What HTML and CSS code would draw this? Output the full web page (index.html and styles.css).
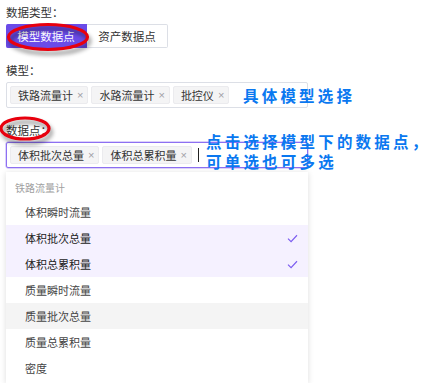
FILE: index.html
```html
<!DOCTYPE html>
<html lang="zh-CN">

<head>
    <meta charset="UTF-8">
    <title>数据点选择</title>
    <link rel="stylesheet" href="styles.css">
</head>

<body>
    <div class="page">
        <div class="label first">数据类型：</div>
        <div class="radio-group">
            <span class="radio-btn active">模型数据点</span>
            <span class="radio-btn">资产数据点</span>
        </div>

        <div class="label">模型：</div>
        <div class="select">
            <span class="tag">铁路流量计<i class="close">×</i></span>
            <span class="tag">水路流量计<i class="close">×</i></span>
            <span class="tag">批控仪<i class="close">×</i></span>
        </div>

        <div class="label">数据点：</div>
        <div class="select focus">
            <span class="tag">体积批次总量<i class="close">×</i></span>
            <span class="tag">体积总累积量<i class="close">×</i></span>
            <span class="cursor"></span>
        </div>

        <div class="dropdown">
            <div class="group-title">铁路流量计</div>
            <div class="option">体积瞬时流量</div>
            <div class="option selected">体积批次总量<svg class="check" viewBox="0 0 12 10"><path d="M1 5.2 L4.4 8.4 L11 1.4" /></svg></div>
            <div class="option selected">体积总累积量<svg class="check" viewBox="0 0 12 10"><path d="M1 5.2 L4.4 8.4 L11 1.4" /></svg></div>
            <div class="option">质量瞬时流量</div>
            <div class="option hover">质量批次总量</div>
            <div class="option">质量总累积量</div>
            <div class="option">密度</div>
        </div>

        <!-- annotations drawn over the screenshot -->
        <div class="note note-model">具体模型选择</div>
        <div class="note note-points">点击选择模型下的数据点，<br>可单选也可多选</div>
        <svg class="marks" width="444" height="389">
            <ellipse cx="48" cy="37" rx="39.5" ry="12.5" />
            <ellipse cx="25" cy="128.5" rx="24" ry="10.5" />
        </svg>
    </div>
</body>

</html>
```

FILE: styles.css
```css
body {
    margin: 0;
    font-family: "Noto Sans CJK SC", "Liberation Sans", sans-serif;
    font-size: 11.5px;
    color: #333;
    background: #fff;
}

.page {
    position: relative;
    padding: 4px 6px 0;
    width: 302px;
}

.label {
    height: 16px;
    line-height: 16px;
    margin: 14px 0 4px;
    color: #333;
}

.label.first {
    margin-top: 0;
}

.radio-group {
    display: flex;
}

.radio-btn {
    width: 81px;
    height: 24px;
    box-sizing: border-box;
    display: flex;
    align-items: center;
    justify-content: center;
    border: 1px solid #dcdfe6;
    border-left: none;
    border-radius: 0 2px 2px 0;
    color: #333;
    background: #fff;
}

.radio-btn.active {
    background: #6a4be8;
    border-color: #6a4be8;
    color: #fff;
    border-radius: 2px 0 0 2px;
}

.select {
    height: 26px;
    box-sizing: border-box;
    border: 1px solid #dcdfe6;
    border-radius: 2px;
    display: flex;
    align-items: center;
    gap: 3px;
    padding: 0 3px;
}

.select.focus {
    border-color: #8d70f2;
    box-shadow: 0 0 0 0.5px #b9a6f7;
}

.tag {
    height: 18px;
    box-sizing: border-box;
    display: flex;
    align-items: center;
    padding: 0 4px 0 7px;
    background: #f4f4f5;
    border: 1px solid #ebebee;
    border-radius: 2px;
    font-size: 11px;
    color: #333;
}

.close {
    font-style: normal;
    font-family: "Liberation Sans", sans-serif;
    font-size: 11px;
    color: #a0a0a6;
    margin-left: 4px;
}

.cursor {
    width: 1px;
    height: 14px;
    background: #222;
    margin-left: 3px;
}

.dropdown {
    margin-top: 4px;
    width: 302px;
    padding: 4px 0 2px;
    background: #fff;
    box-shadow: 0 1px 6px rgba(0, 0, 0, 0.14);
}

.group-title {
    height: 23px;
    line-height: 23px;
    padding-left: 9px;
    font-size: 10px;
    color: #a0a0a0;
}

.option {
    height: 26px;
    display: flex;
    align-items: center;
    justify-content: space-between;
    padding: 0 10px 0 19px;
    font-size: 11px;
    color: #444;
}

.option.selected {
    background: #f5f1ff;
    color: #222;
}

.option.hover {
    background: #f4f4f4;
}

.check {
    width: 11px;
    height: 9px;
    fill: none;
    stroke: #7b5cf0;
    stroke-width: 1.3;
}

.note {
    position: absolute;
    white-space: nowrap;
    color: #0a78f0;
    font-size: 15.5px;
    font-weight: bold;
    letter-spacing: 3.2px;
    line-height: 20px;
}

.note-model {
    left: 243px;
    top: 85px;
}

.note-points {
    left: 206px;
    top: 131px;
}

.marks {
    position: absolute;
    left: 0;
    top: 0;
    pointer-events: none;
}

.marks ellipse {
    fill: none;
    stroke: #e8000e;
    stroke-width: 3.2;
    filter: drop-shadow(2px 4px 2px rgba(0, 0, 0, 0.45));
}
```
